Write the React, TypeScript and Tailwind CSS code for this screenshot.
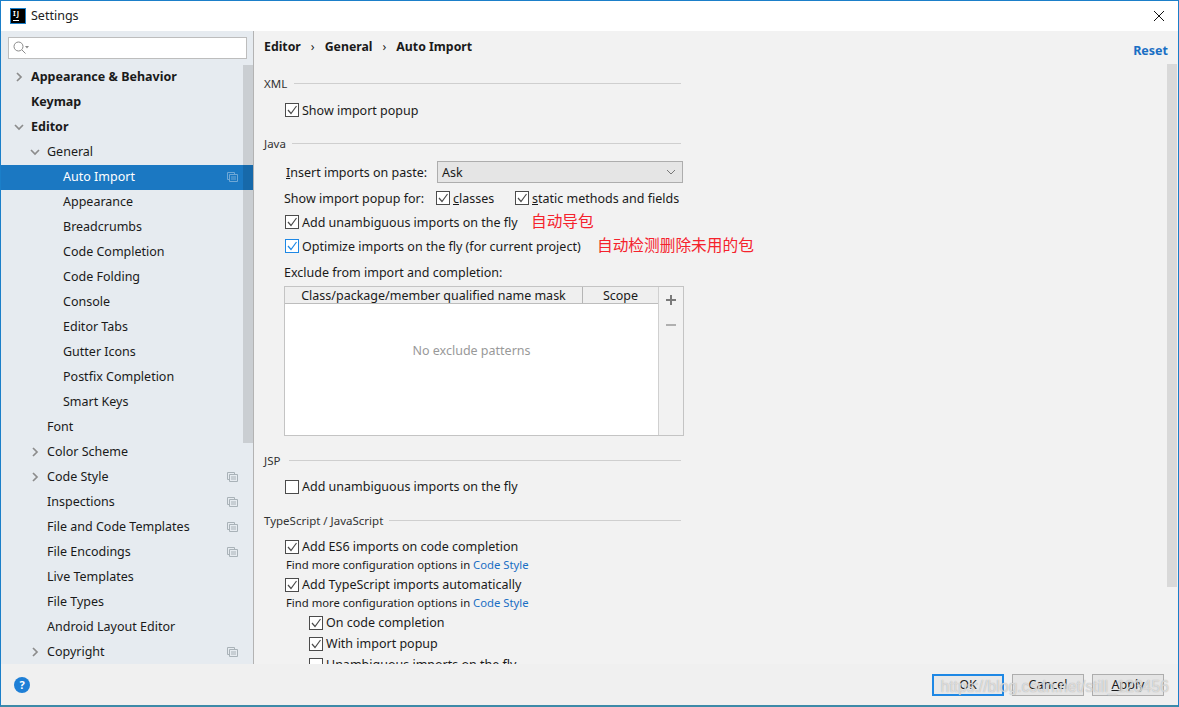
import React from 'react';

const treeItems = [
  { label: 'Appearance & Behavior', indent: 0, bold: true, arrow: 'right' },
  { label: 'Keymap', indent: 0, bold: true },
  { label: 'Editor', indent: 0, bold: true, arrow: 'down' },
  { label: 'General', indent: 1, arrow: 'down' },
  { label: 'Auto Import', indent: 2, selected: true, copy: true },
  { label: 'Appearance', indent: 2 },
  { label: 'Breadcrumbs', indent: 2 },
  { label: 'Code Completion', indent: 2 },
  { label: 'Code Folding', indent: 2 },
  { label: 'Console', indent: 2 },
  { label: 'Editor Tabs', indent: 2 },
  { label: 'Gutter Icons', indent: 2 },
  { label: 'Postfix Completion', indent: 2 },
  { label: 'Smart Keys', indent: 2 },
  { label: 'Font', indent: 1 },
  { label: 'Color Scheme', indent: 1, arrow: 'right' },
  { label: 'Code Style', indent: 1, arrow: 'right', copy: true },
  { label: 'Inspections', indent: 1, copy: true },
  { label: 'File and Code Templates', indent: 1, copy: true },
  { label: 'File Encodings', indent: 1, copy: true },
  { label: 'Live Templates', indent: 1 },
  { label: 'File Types', indent: 1 },
  { label: 'Android Layout Editor', indent: 1 },
  { label: 'Copyright', indent: 1, arrow: 'right', copy: true },
];

const Arrow: React.FC<{ dir: string }> = ({ dir }) => (
  <svg width="10" height="10" viewBox="0 0 10 10" fill="none" stroke="#8c8c8c" strokeWidth="1.7">
    <path d={dir === 'right' ? 'M3 1l4 4-4 4' : 'M1 3l4 4 4-4'} />
  </svg>
);

const CopyIcon: React.FC<{ light?: boolean }> = ({ light }) => (
  <svg width="11" height="10" viewBox="0 0 11 10" fill="none" stroke={light ? '#6fa8d6' : '#a9b2b8'} strokeWidth="1">
    <path d="M2.500 7.500H.5V.5h7v2" />
    <path d="M2.500 2.500h8v7h-8z" />
    <path d="M4 5h5M4 7h5" />
  </svg>
);

const Check: React.FC<{ checked?: boolean; focused?: boolean }> = ({ checked, focused }) => (
  <span
    className={`flex h-[14px] w-[14px] shrink-0 items-center justify-center border bg-white ${
      focused ? 'border-[#1e88e5]' : 'border-[#4b4b4b]'
    }`}
  >
    {checked && (
      <svg width="12" height="12" viewBox="0 0 12 12" fill="none" stroke={focused ? '#1e88e5' : '#4b4b4b'} strokeWidth="1.2">
        <path d="M2 6l3 3.500L10.500 2" />
      </svg>
    )}
  </span>
);

const Section: React.FC<{ title: string; titleWidth: string }> = ({ title, titleWidth }) => (
  <div className="flex h-5 w-[417px] items-center">
    <span className={`${titleWidth} shrink-0 whitespace-nowrap text-[11.500px] text-[#333]`}>{title}</span>
    <span className="mt-[-1px] h-px flex-1 bg-[#cfcfcf]" />
  </div>
);

const CheckRow: React.FC<{ label: string; checked?: boolean; focused?: boolean; pad?: string; nudge?: boolean }> = ({
  label,
  checked,
  focused,
  pad = 'pl-[21px]',
  nudge,
}) => (
  <div className={`flex h-5 items-center gap-[3px] whitespace-nowrap ${pad}`}>
    <Check checked={checked} focused={focused} />
    <span className={nudge ? 'translate-y-px' : ''}>{label}</span>
  </div>
);

const MoreOptions = () => (
  <div className="flex h-[18px] items-center whitespace-nowrap pb-[2px] pl-[22px] text-[11.300px]">
    Find more configuration options in&nbsp;<span className="text-[#1a6fc4]">Code Style</span>
  </div>
);

export default function App() {
  return (
    <div
      className="relative flex h-[707px] w-[1179px] flex-col overflow-hidden border border-b-2 border-[#1b7fc9] border-b-[#3d8aa8] bg-[#f2f2f2] text-[12.500px] text-[#1a1a1a]"
      style={{ fontFamily: '"Noto Sans", "Open Sans", "Noto Sans CJK SC", sans-serif' }}
    >
      {/* Title bar */}
      <div className="flex h-[30px] shrink-0 items-center bg-white pl-[9px] pr-[13px]">
        <div className="relative h-4 w-4 border border-[#1b7fc9] bg-black">
          <span className="absolute left-[2px] top-0 text-[7px] font-bold leading-[10px] tracking-[1px] text-white">IJ</span>
          <span className="absolute bottom-[2px] left-[2px] h-px w-[6px] bg-white" />
        </div>
        <span className="ml-[5px] text-[12.500px] text-[#222]">Settings</span>
        <svg className="ml-auto" width="12" height="12" viewBox="0 0 12 12" stroke="#111" strokeWidth="1">
          <path d="M1 1l10 10M11 1L1 11" />
        </svg>
      </div>

      <div className="flex min-h-0 flex-1">
        {/* Sidebar */}
        <aside className="relative flex w-[253px] shrink-0 flex-col overflow-hidden border-r border-[#b3b3b3] bg-[#e6ebf0]">
          <div className="flex h-[34px] shrink-0 items-start pl-[7px] pt-[6px]">
            <div className="flex h-[22px] w-[239px] items-center border border-[#bdbdbd] bg-white pl-1">
              <svg width="16" height="14" viewBox="0 0 16 14" fill="none" stroke="#8a8a8a" strokeWidth="1">
                <circle cx="5.500" cy="5.500" r="4.500" />
                <path d="M9 9l3.500 3.500" />
                <path d="M12 5h4l-2 2.500z" fill="#8a8a8a" stroke="none" />
              </svg>
            </div>
          </div>
          <div className="absolute right-0 top-[34px] z-10 h-[378px] w-[10px] bg-black/12" />
          {treeItems.map((item) => (
            <div
              key={item.label}
              className={`relative flex h-[25px] shrink-0 items-center pb-[1px] pr-[15px] ${
                item.selected ? 'bg-[#1b78c2] text-white' : ''
              } ${item.indent === 0 ? 'pl-[30px]' : item.indent === 1 ? 'pl-[46px]' : 'pl-[62px]'} ${
                item.bold ? 'font-bold' : ''
              }`}
            >
              {item.arrow && (
                <span className={`absolute top-[7px] ${item.indent === 0 ? 'left-[13px]' : 'left-[29px]'}`}>
                  <Arrow dir={item.arrow} />
                </span>
              )}
              <span>{item.label}</span>
              {item.copy && (
                <span className="ml-auto">
                  <CopyIcon light={item.selected} />
                </span>
              )}
            </div>
          ))}
        </aside>

        {/* Main pane */}
        <main className="flex min-w-0 flex-1 overflow-hidden">
          <div className="min-w-0 flex-1 pl-[10px]">
            <div className="flex h-[33px] items-start justify-between">
              <div className="mt-[7px] flex items-center whitespace-nowrap text-[12.300px] font-bold">
                Editor<span className="mx-[10px] font-normal">›</span>General<span className="mx-[10px] font-normal">›</span>Auto Import
              </div>
              <a className="mr-[-1px] mt-[11px] text-[12.500px] font-bold text-[#1a6fc4]">Reset</a>
            </div>

            <div className="mt-[10px]">
              <Section title="XML" titleWidth="w-[30px]" />
            </div>
            <div className="mt-[6px]">
              <CheckRow label="Show import popup" checked nudge />
            </div>

            <div className="mt-[14px]">
              <Section title="Java" titleWidth="w-[28px]" />
            </div>
            <div className="mt-[7px] flex h-[22px] items-center pl-[22px]">
              <span className="w-[151px] translate-y-px whitespace-nowrap">
                <span className="underline">I</span>nsert imports on paste:
              </span>
              <div className="flex h-[22px] w-[246px] items-center justify-between border border-[#adadad] bg-[#e5e5e5] px-1">
                <span className="translate-y-px">Ask</span>
                <svg className="mr-[2px]" width="10" height="6" viewBox="0 0 10 6" fill="none" stroke="#777" strokeWidth="1">
                  <path d="M1 1l4 4 4-4" />
                </svg>
              </div>
            </div>
            <div className="mt-[5px] flex h-5 items-center whitespace-nowrap pl-[20px]">
              <span className="w-[152px] translate-y-px">Show import popup for:</span>
              <Check checked />
              <span className="ml-[3px] w-[62px] translate-y-px">
                <span className="underline">c</span>lasses
              </span>
              <Check checked />
              <span className="ml-[3px] translate-y-px">
                <span className="underline">s</span>tatic methods and fields
              </span>
            </div>
            <div className="relative mt-[4px]">
              <CheckRow label="Add unambiguous imports on the fly" checked nudge />
              <span className="absolute left-[267px] top-[-3px] text-[15.700px] leading-6 text-[#f5222d]">自动导包</span>
            </div>
            <div className="relative mt-[4px]">
              <CheckRow label="Optimize imports on the fly (for current project)" checked focused nudge />
              <span className="absolute left-[333px] top-[-3px] text-[15.700px] leading-6 text-[#f5222d]">自动检测删除未用的包</span>
            </div>
            <div className="mt-[6px] flex h-5 translate-y-px items-center pl-[20px]">Exclude from import and completion:</div>

            {/* Exclude table */}
            <div className="ml-[20px] mt-[4px] flex h-[150px] w-[400px] border border-[#c4c4c4]">
              <div className="flex w-[373px] flex-col bg-white">
                <div className="flex h-[17px] shrink-0 border-b border-[#bdbdbd] bg-[#efefef] text-[12.500px] leading-[18px]">
                  <div className="w-[298px] border-r border-[#b5b5b5] text-center">Class/package/member qualified name mask</div>
                  <div className="flex-1 text-center">Scope</div>
                </div>
                <div className="flex h-[95px] items-center justify-center text-[#999]">No exclude patterns</div>
              </div>
              <div className="flex flex-1 flex-col items-center border-l border-[#d0d0d0] pt-[7px]">
                <svg width="12" height="12" viewBox="0 0 12 12" stroke="#7a7a7a" strokeWidth="2">
                  <path d="M6 1v10M1 6h10" />
                </svg>
                <svg className="mt-[13px]" width="12" height="12" viewBox="0 0 12 12" stroke="#b0b0b0" strokeWidth="2">
                  <path d="M1 6h10" />
                </svg>
              </div>
            </div>

            <div className="mt-[15px]">
              <Section title="JSP" titleWidth="w-[25px]" />
            </div>
            <div className="mt-[6px]">
              <CheckRow label="Add unambiguous imports on the fly" />
            </div>

            <div className="mt-[14px]">
              <Section title="TypeScript / JavaScript" titleWidth="w-[125px]" />
            </div>
            <div className="mt-[6px]">
              <CheckRow label="Add ES6 imports on code completion" checked />
            </div>
            <MoreOptions />
            <CheckRow label="Add TypeScript imports automatically" checked />
            <MoreOptions />
            <CheckRow label="On code completion" checked pad="pl-[45px]" />
            <div className="mt-[1px]">
              <CheckRow label="With import popup" checked pad="pl-[45px]" />
            </div>
            <div className="mt-[1px]">
              <CheckRow label="Unambiguous imports on the fly" pad="pl-[45px]" />
            </div>
          </div>
          <div className="mt-[33px] h-[523px] w-[10px] shrink-0 bg-[#d9d9d9]" />
          <div className="w-px shrink-0" />
        </main>
      </div>

      {/* Footer */}
      <div className="relative flex h-[41px] shrink-0 items-start bg-[#f0f0f0] pl-[13px] pr-[14px] pt-[10px]">
        <div className="mt-[3px] flex h-4 w-4 items-center justify-center rounded-full bg-[#1e7fd6] text-[11px] font-bold text-white">?</div>
        <div className="ml-auto flex gap-2">
          <button className="h-[22px] w-[72px] border-2 border-[#1e88e5] bg-[#e8e8e8]">OK</button>
          <button className="h-[22px] w-[72px] border border-[#adadad] bg-[#e5e5e5]">Cancel</button>
          <button className="h-[22px] w-[72px] border border-[#adadad] bg-[#e5e5e5]">
            <span className="underline">A</span>pply
          </button>
        </div>
        <span
          className="pointer-events-none absolute right-[9px] top-[13px] whitespace-nowrap text-[15.700px] leading-5 text-white/60"
          style={{ fontFamily: '"Liberation Sans", sans-serif', textShadow: '0 0 1px #999' }}
        >
          https://blog.csdn.net/still_123456
        </span>
      </div>
    </div>
  );
}
